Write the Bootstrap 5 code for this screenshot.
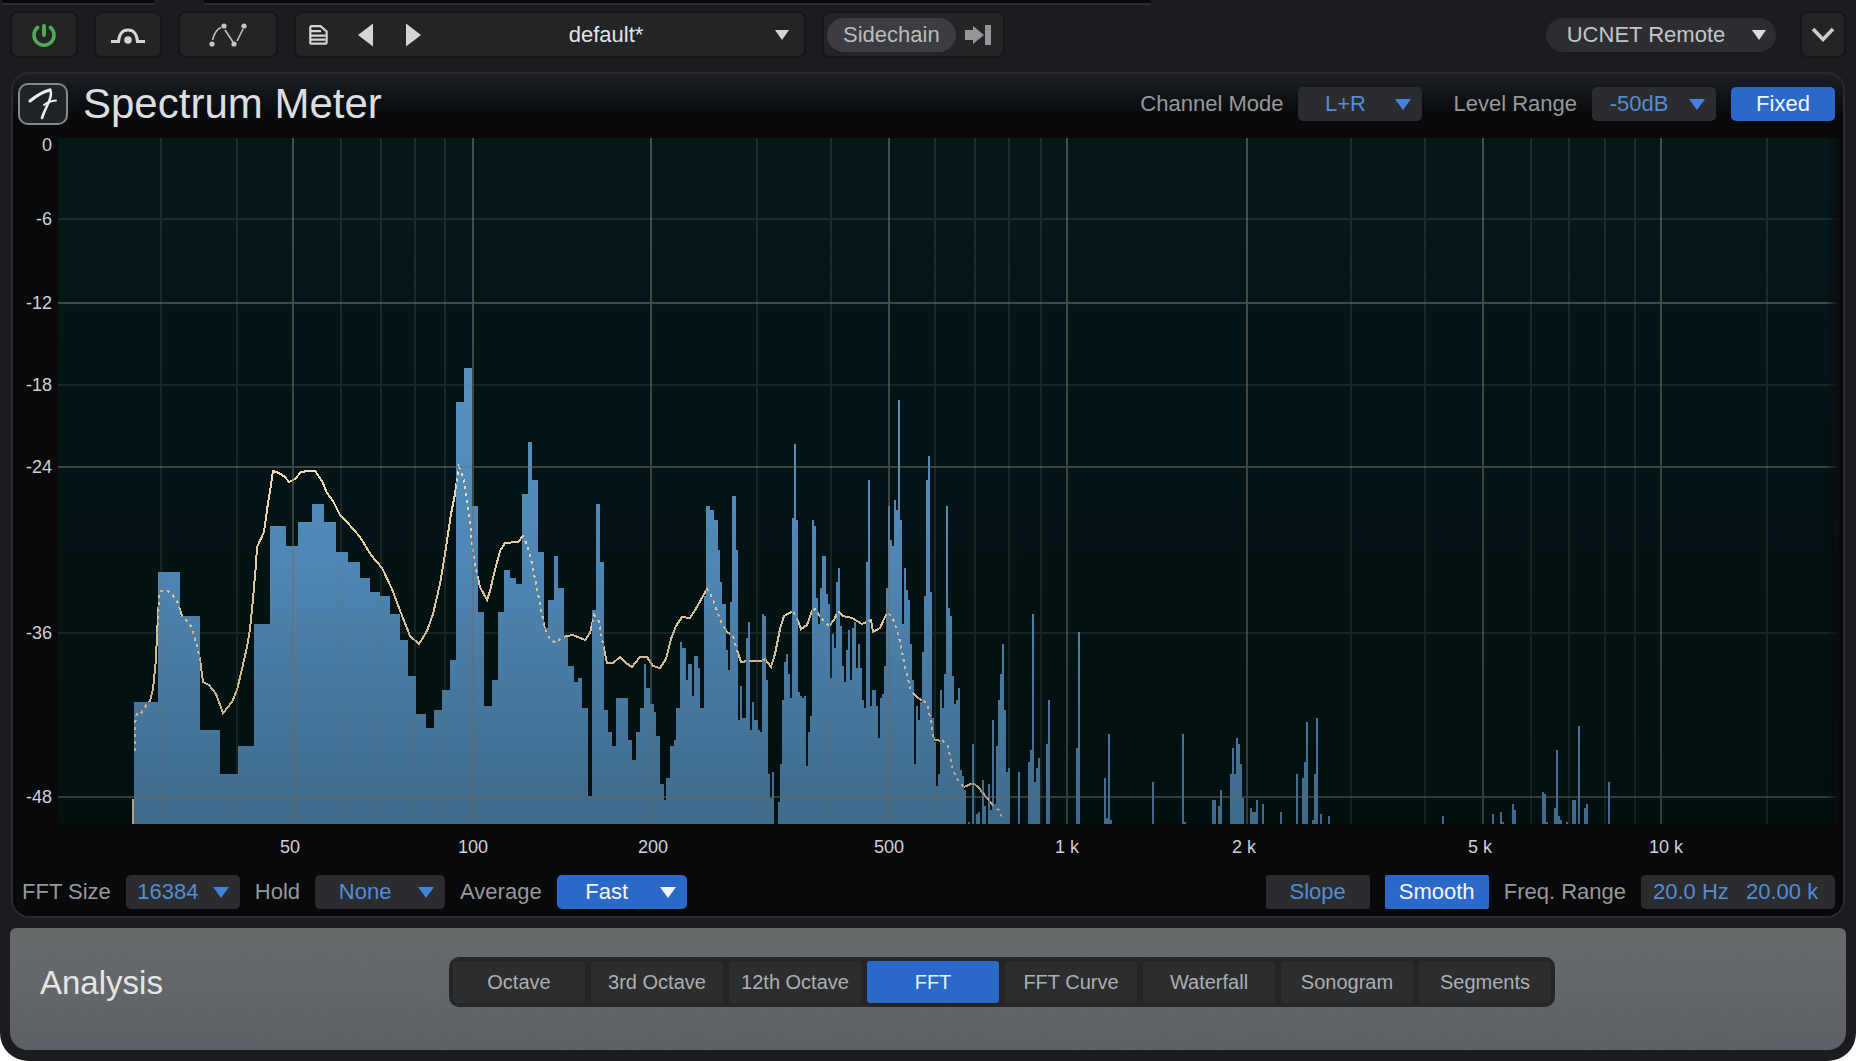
<!DOCTYPE html>
<html lang="en">
<head>
<meta charset="utf-8">
<meta name="viewport" content="width=device-width, initial-scale=1">
<title>Spectrum Meter</title>
<link href="https://cdn.jsdelivr.net/npm/bootstrap@5.3.0/dist/css/bootstrap.min.css" rel="stylesheet">
<style>
body { background: #fff; font-family: "Liberation Sans", Arial, sans-serif; font-size: 22px; line-height: 28px; color: #96989b; }
svg { display: block; flex: none; }
button, select, input { font: inherit; color: inherit; background: none; border: 0; padding: 0; margin: 0; min-width: 0; }
select { appearance: none; text-align: center; text-align-last: center; }
.shell { background: #1b1c20; border-radius: 0 0 28px 28px; min-height: 100vh; padding-bottom: 10px; }
.edge { height: 5px; margin-left: 2px; }
.edge-a, .edge-b { background: #08080a; border-bottom: 2px solid #2c2d30; }
.edge-a { width: 152px; }
.edge-b { width: 51.1%; margin-left: 50px; }
.toolbar { margin: 6px 10px 14px; gap: 16px; }
.tool { height: 47px; background: #232426; border: 2px solid #151619; border-radius: 8px; color: #d3d5d7; }
.tool-s { width: 68px; } .tool-m { width: 100px; } .tool-x { width: 46px; }
.preset { width: 512px; padding: 0 15px 0 13px; }
.preset select { color: #e2e3e5; padding-right: 16px; }
.preset .go { width: 48px; height: 43px; display: flex; align-items: center; }
.chain { padding: 0 11px 0 3px; gap: 9px; }
.pill { height: 34px; border-radius: 17px; background: #3b3d42; color: #b9bbbe; padding: 0 16px; }
.pill-remote { width: 230px; background: #2d2e31; color: #c3c5c7; padding: 0 10px; }
.pill-remote select { padding-right: 8px; }
.panel { margin: 0 11px 10px; border: 2px solid #292b2e; border-radius: 18px; background: linear-gradient(#1b2227 0, #11161a 18px, #08090b 42px); }
.panel-head { height: 64px; padding: 0 8px 4px 5px; }
.logo { width: 50px; height: 42px; border: 2px solid #85878a; border-radius: 10px; background: #202326; color: #eceded; }
.title { font-size: 42px; line-height: 44px; font-weight: 400; color: #dcdee0; margin: 0 0 0 15px; }
.gap-a { gap: 15px; }
.ctl { height: 34px; border-radius: 5px; background: #2b2c2f; color: #528dd6; }
.ctl select { flex: 1; height: 34px; }
.ctl svg { margin: 0 11px 0 3px; fill: #4383da; }
.ctl.on { background: #2b69c8; color: #f2f6fc; }
.ctl.on svg { fill: #f2f6fc; }
.w-a { width: 114px; } .w-b { width: 124px; } .w-c { width: 130px; } .w-d { width: 104px; }
.sq { border-radius: 2px; }
.panel-foot { padding: 10px 8px 7px 9px; }
.range { width: 194px; padding-left: 12px; }
.range .lo { width: 93px; } .range .hi { width: 84px; }
.plot { overflow: visible; }
.plot text { font-size: 18px; fill: #cfd1d4; }
.analysis { position: relative; margin: 0 10px; height: 122px; border-radius: 6px 6px 18px 18px; overflow: hidden; background: linear-gradient(#646667, #5f6467 45%, #585b61); }
.grain { position: absolute; inset: 0; width: 100%; height: 100%; opacity: .1; pointer-events: none; }
.analysis-name { flex: 0 0 439px; padding: 0 0 12px 30px; font-size: 33px; line-height: 40px; font-weight: 400; color: #e4e5e6; margin: 0; }
.modes { gap: 6px; padding: 4px; background: #242527; border-radius: 10px; margin-bottom: 14px; }
.mode { width: 132px; height: 42px; border-radius: 3px; background: #2c2d2f; color: #adafb1; font-size: 20px; line-height: 24px; }
.mode.on { background: #2b69c8; color: #e9eff8; }
</style>
<script src="https://cdn.jsdelivr.net/npm/bootstrap@5.3.0/dist/js/bootstrap.bundle.min.js"></script>
</head>
<body>
<div class="shell d-flex flex-column">
  <div class="edge d-flex"><div class="edge-a"></div><div class="edge-b"></div></div>

  <header class="toolbar d-flex align-items-center">
    <button class="tool tool-s d-flex align-items-center justify-content-center" aria-label="Power">
      <svg width="26" height="26" viewBox="0 0 26 26" fill="none" stroke="#4fa852" stroke-linecap="round"><path d="M6.600 5.500A10 10 0 1 0 19.400 5.500" stroke-width="3.600"/><path d="M13 4V13" stroke-width="4"/></svg>
    </button>
    <button class="tool tool-s d-flex align-items-center justify-content-center" aria-label="Bypass">
      <svg width="34" height="20" viewBox="0 0 34 20"><path d="M0 16.500H7.500C8.500 8 11.500 5 17 5S25.500 8 26.500 16.500H34" fill="none" stroke="#d3d5d7" stroke-width="3.200"/><circle cx="17" cy="15" r="3.800" fill="#d3d5d7"/></svg>
    </button>
    <button class="tool tool-m d-flex align-items-center justify-content-center" aria-label="Automation">
      <svg width="40" height="26" viewBox="0 0 40 26"><g fill="none" stroke="#bfc1c3" stroke-width="1.600"><path d="M4.500 18C6 12 9 7 13 5.500M17 8L25 20M29 19L35 7"/></g><g fill="#c3c5c7"><circle cx="4" cy="22" r="2.600"/><circle cx="16" cy="4" r="2.600"/><circle cx="26" cy="22" r="2.600"/><circle cx="36" cy="4" r="2.600"/></g></svg>
    </button>
    <div class="tool preset d-flex align-items-center">
      <button class="go" aria-label="Presets"><svg width="19" height="20" viewBox="0 0 19 20" fill="none" stroke="#d3d5d7" stroke-width="2.200"><path d="M2.500 1.200H11.500L17.600 6.500V17.500Q17.600 18.700 16.500 18.700H2.500Q1.300 18.700 1.300 17.500V2.500Q1.300 1.200 2.500 1.200Z"/><path d="M2 6.200H12M2 10.600H16.500M2 14.600H16.500"/></svg></button>
      <button class="go" aria-label="Previous preset"><svg width="17" height="24" viewBox="0 0 17 24" fill="#d3d5d7"><path d="M1 12L16 0.500V23.500Z"/></svg></button>
      <button class="go" aria-label="Next preset"><svg width="17" height="24" viewBox="0 0 17 24" fill="#d3d5d7"><path d="M16 12L1 0.500V23.500Z"/></svg></button>
      <select class="flex-grow-1" aria-label="Preset"><option>default*</option></select>
      <svg width="14" height="10" viewBox="0 0 14 10" fill="#d3d5d7"><path d="M0 0H14L7 10Z"/></svg>
    </div>
    <div class="tool chain d-flex align-items-center">
      <button class="pill">Sidechain</button>
      <svg width="27" height="20" viewBox="0 0 27 20" fill="#939598"><path d="M0 5H8V1L19 10L8 19V15H0ZM20 0H26V20H20Z"/></svg>
    </div>
    <div class="pill pill-remote d-flex align-items-center ms-auto">
      <select class="flex-grow-1" aria-label="Remote control"><option>UCNET Remote</option></select>
      <svg class="ms-2" width="14" height="10" viewBox="0 0 14 10" fill="#dcdee0"><path d="M0 0H14L7 10Z"/></svg>
    </div>
    <button class="tool tool-x d-flex align-items-center justify-content-center ms-2" aria-label="More"><svg width="24" height="16" viewBox="0 0 24 16" fill="none" stroke="#c9cbcd" stroke-width="3.600"><path d="M2 2L12 12.500L22 2"/></svg></button>
  </header>

  <main class="panel">
    <div class="panel-head d-flex align-items-center">
      <div class="logo d-flex"><svg width="46" height="38" viewBox="0 0 46 38" fill="none" stroke="currentColor" stroke-linecap="round" stroke-linejoin="round"><path d="M10 16Q21 7 30 5" stroke-width="3.200"/><path d="M30 5Q33 9 27 21Q24 27 22 33" stroke-width="2.600"/><path d="M24 20Q29 16 36 15.500" stroke-width="2"/></svg></div>
      <h1 class="title">Spectrum Meter</h1>
      <div class="d-flex align-items-center gap-a ms-auto">
        <label for="chmode">Channel Mode</label>
        <div class="ctl w-b d-flex align-items-center me-3"><select id="chmode"><option>L+R</option></select><svg width="16" height="11" viewBox="0 0 16 11"><path d="M0 0H16L8 11Z"/></svg></div>
        <label for="lrange">Level Range</label>
        <div class="ctl w-b d-flex align-items-center"><select id="lrange"><option>-50dB</option></select><svg width="16" height="11" viewBox="0 0 16 11"><path d="M0 0H16L8 11Z"/></svg></div>
        <button class="ctl on w-d">Fixed</button>
      </div>
    </div>

    <svg class="plot w-100" viewBox="13 139 1830 727" role="img" aria-label="Frequency spectrum">
      <defs>
        <linearGradient id="back" gradientUnits="userSpaceOnUse" x1="0" y1="139" x2="0" y2="825"><stop offset="0" stop-color="#04181a"/><stop offset=".5" stop-color="#041315"/><stop offset="1" stop-color="#031011"/></linearGradient>
        <linearGradient id="fade"><stop offset="0" stop-color="#08090b" stop-opacity="0"/><stop offset="1" stop-color="#0b0e10"/></linearGradient>
        <linearGradient id="fill" gradientUnits="userSpaceOnUse" x1="0" y1="360" x2="0" y2="825"><stop offset="0" stop-color="#5692c0"/><stop offset=".4" stop-color="#4f88b7"/><stop offset="1" stop-color="#3f6a8a"/></linearGradient>
        <linearGradient id="grid" gradientUnits="userSpaceOnUse" x1="0" y1="139" x2="0" y2="825"><stop offset="0" stop-color="#767876" stop-opacity=".58"/><stop offset=".6" stop-color="#70706e" stop-opacity=".5"/><stop offset="1" stop-color="#646260" stop-opacity=".5"/></linearGradient>
        <linearGradient id="curve" gradientUnits="userSpaceOnUse" x1="0" y1="460" x2="0" y2="825"><stop offset="0" stop-color="#f3dcae"/><stop offset="1" stop-color="#b69f7c"/></linearGradient>
        <path id="avg" d="M133 825V800M135 752V724L137 714H141L147 705 150 702 153 690 156 660 157 635 159 600 160 592H168L172 595 178 604 182 617 186 621 191 627 196 643 200 660 203 683 209 686 216 695 223 714 232 703 237 691 242 670 247 648 250 630 253 600 256 565 257 548 264 533 268 504 271 486 273 472 279 474 285 478 289 483 295 480 301 473 308 472H315L322 482 327 494 333 502 340 516 347 523 360 538 371 556 382 569 392 590 401 614 410 637 419 645 427 632 433 615 440 585 445 555 451 515 455 495 457 480 459 468 463 478 466 493 470 523 473 555 476 570 480 588 487 601 490 592 494 575 500 552 505 544 518 543 523 537 527 546 531 560 536 585 541 610 545 630 550 640 556 644 562 638 573 636 585 641 590 634 594 616 599 622 602 640 607 664H613L620 658 626 664 632 668 640 658H647L653 667 660 669 666 660 671 640 676 627 682 618 690 619 697 608 703 597 707 590 712 598 717 612 722 625 727 633 733 637 737 651 741 663 748 662H762L765 660 771 668 775 655 780 630 784 617 793 612 798 622 801 630 807 626 812 612 815 610 822 620 829 627 834 621 838 612 843 617 852 619 862 625 871 621 873 633 880 629 885 618 888 613 894 622 899 638 905 668 911 692 914 695 918 699 927 704 930 718 933 738 935 741 943 742 948 747 952 768 957 780 964 788 973 784 978 788 987 799 995 809 999 811 1003 821" fill="none" stroke="url(#curve)" shape-rendering="crispEdges"/>
      </defs>
      <rect x="58" y="139" width="1780" height="686" fill="url(#back)"/>
      <use href="#avg" stroke-width="2"/>
      <path fill="url(#fill)" shape-rendering="crispEdges" d="M134 825V703H158V573H180V617H200V731H220V775H238V747H254V625H270V527H286V547H298V523H312V505H324V523H336V553H348V563H360V579H370V593H380V597H390V615H400V641H408V677H416V715H426V729H434V711H442V691H450V661H456V403H464V369H472V507H478V613H484V707H492V681H498V613H504V571H510V579H516V585H522V495H528V443H532V481H538V553H544V629H548V601H554V557H558V589H564V638H568V667H574V683H578V679H582V709H588V797H592V611H596V505H600V563H604V711H608V733H612V747H616V699H628V741H632V761H636V733H640V709H644V665H646V689H650V705H654V713H656V737H660V785H664V801H666V779H670V747H674V741H676V709H680V643H682V649H686V681H688V665H692V697H694V657H698V669H700V709H704V597H706V507H710V511H714V521H718V551H720V583H722V605H726V651H728V671H730V603H732V497H736V551H738V721H740V687H742V719H746V639H748V623H750V731H752V703H754V721H758V731H760V733H762V615H764V617H766V681H768V775H770V799H772V773H774V825H778V803H780V765H782V701H784V663H786V655H788V675H790V699H792V519H794V445H796V521H798V693H800V697H802V699H804V697H806V767H808V733H810V717H812V521H814V527H816V599H818V625H820V589H822V557H826V595H828V605H830V679H832V635H834V649H836V583H838V569H840V627H842V667H844V683H846V651H848V631H850V681H852V629H854V623H856V669H858V645H860V669H862V701H864V709H866V563H868V481H870V707H872V691H876V707H878V739H880V699H882V695H884V667H886V589H888V507H890V541H892V547H894V501H896V511H898V401H900V521H902V625H904V569H906V591H908V601H910V645H912V681H914V765H916V707H918V721H920V703H922V653H924V597H926V481H928V457H930V593H932V719H934V743H936V787H938V775H940V691H942V709H944V675H946V507H948V609H950V617H952V677H954V705H956V701H958V689H960V771H962V777H964V791H966V825H968V823H970V825H972V745H974V825H976V815H978V813H980V825H982V781H984V807H986V825H988V785H990V811H992V721H994V805H996V747H998V701H1000V675H1002V645H1004V711H1006V773H1008V769H1010V825H1018V773H1020V825H1028V763H1030V751H1032V615H1034V783H1036V769H1038V759H1040V825H1046V745H1048V701H1050V825H1076V749H1078V633H1080V825H1104V779H1106V819H1108V735H1110V821H1112V825H1152V783H1154V825H1182V735H1184V823H1186V825H1212V801H1216V825H1218V807H1220V791H1222V825H1230V775H1232V749H1234V775H1236V739H1238V745H1240V765H1242V799H1244V825H1250V809H1252V813H1256V801H1258V825H1262V805H1264V825H1280V813H1282V825H1296V775H1298V825H1302V779H1304V763H1306V723H1308V825H1312V821H1314V775H1316V719H1318V825H1320V815H1322V825H1328V817H1330V825H1442V817H1444V825H1492V815H1494V825H1500V813H1502V823H1504V825H1512V805H1514V811H1516V825H1542V793H1544V795H1546V823H1548V825H1554V809H1556V751H1558V817H1560V821H1562V825H1566V823H1568V825H1572V801H1576V825H1578V727H1580V825H1584V809H1586V805H1588V825H1608V783H1610V825Z"/>
      <use href="#avg" stroke-width="2" stroke-dasharray="3 4"/>
      <g stroke="url(#grid)" stroke-width="2" fill="none" shape-rendering="crispEdges">
        <path d="M293 139V825M473 139V825M651 139V825M889 139V825M1067 139V825M1247 139V825M1483 139V825M1661 139V825M58 304H1838M58 468H1838M58 798H1838"/>
        <path opacity=".38" d="M161 139V825M237 139V825M341 139V825M381 139V825M415 139V825M445 139V825M757 139V825M831 139V825M935 139V825M975 139V825M1009 139V825M1041 139V825M1351 139V825M1425 139V825M1531 139V825M1569 139V825M1605 139V825M1635 139V825M1767 139V825M58 220H1838M58 386H1838M58 634H1838"/>
      </g>
      <rect x="1826" y="139" width="13" height="688" fill="url(#fade)"/>
      <g text-anchor="end"><text x="52" y="152">0</text><text x="52" y="226">-6</text><text x="52" y="310">-12</text><text x="52" y="392">-18</text><text x="52" y="474">-24</text><text x="52" y="640">-36</text><text x="52" y="804">-48</text></g>
      <g text-anchor="middle"><text x="290" y="854">50</text><text x="473" y="854">100</text><text x="653" y="854">200</text><text x="889" y="854">500</text><text x="1067" y="854">1 k</text><text x="1244" y="854">2 k</text><text x="1480" y="854">5 k</text><text x="1666" y="854">10 k</text></g>
    </svg>

    <div class="panel-foot d-flex align-items-center gap-a">
      <label for="fft">FFT Size</label>
      <div class="ctl w-a d-flex align-items-center"><select id="fft"><option>16384</option></select><svg width="16" height="11" viewBox="0 0 16 11"><path d="M0 0H16L8 11Z"/></svg></div>
      <label for="hold">Hold</label>
      <div class="ctl w-c d-flex align-items-center"><select id="hold"><option>None</option></select><svg width="16" height="11" viewBox="0 0 16 11"><path d="M0 0H16L8 11Z"/></svg></div>
      <label for="average">Average</label>
      <div class="ctl on w-c d-flex align-items-center"><select id="average"><option>Fast</option></select><svg width="16" height="11" viewBox="0 0 16 11"><path d="M0 0H16L8 11Z"/></svg></div>
      <button class="ctl sq w-d ms-auto">Slope</button>
      <button class="ctl on sq w-d">Smooth</button>
      <label for="flo">Freq. Range</label>
      <div class="ctl range d-flex"><input class="lo" id="flo" type="text" value="20.0 Hz"><input class="hi" type="text" value="20.00 k" aria-label="Highest frequency"></div>
    </div>
  </main>

  <footer class="analysis d-flex align-items-center">
    <svg class="grain" aria-hidden="true"><filter id="noise"><feTurbulence type="fractalNoise" baseFrequency=".5" numOctaves="2"/><feColorMatrix type="saturate" values="0"/></filter><rect width="100%" height="100%" filter="url(#noise)"/></svg>
    <h2 class="analysis-name position-relative">Analysis</h2>
    <div class="modes d-flex position-relative" role="group" aria-label="Analysis mode">
      <button class="mode">Octave</button><button class="mode">3rd Octave</button><button class="mode">12th Octave</button><button class="mode on">FFT</button><button class="mode">FFT Curve</button><button class="mode">Waterfall</button><button class="mode">Sonogram</button><button class="mode">Segments</button>
    </div>
  </footer>
</div>
</body>
</html>
